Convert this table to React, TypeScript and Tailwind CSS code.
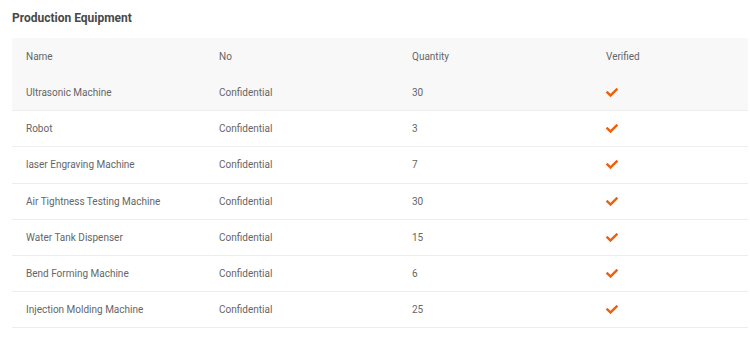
import { FaCheck } from 'react-icons/fa';

const rows = [
  { name: 'Ultrasonic Machine', no: 'Confidential', qty: '30', hl: true },
  { name: 'Robot', no: 'Confidential', qty: '3' },
  { name: 'laser Engraving Machine', no: 'Confidential', qty: '7' },
  { name: 'Air Tightness Testing Machine', no: 'Confidential', qty: '30' },
  { name: 'Water Tank Dispenser', no: 'Confidential', qty: '15' },
  { name: 'Bend Forming Machine', no: 'Confidential', qty: '6' },
  { name: 'Injection Molding Machine', no: 'Confidential', qty: '25' },
];

const cols = 'grid grid-cols-[193px_193px_194px_1fr] items-center';

export default function App() {
  return (
    <div className="h-[337px] w-[750px] bg-white font-['Roboto',sans-serif] text-[10px] text-[#666]">
      <div className="px-3 pt-[10px]">
        <h2 className="text-[12px] font-bold leading-[17px] text-[#484848]">Production Equipment</h2>
        <div className="mt-[11px] mr-[-10px]">
          <div className={`${cols} h-[37px] bg-[#f8f8f8] pl-[14px]`}>
            <span>Name</span>
            <span>No</span>
            <span>Quantity</span>
            <span>Verified</span>
          </div>
          {rows.map((r) => (
            <div
              key={r.name}
              className={`${cols} h-[36.2px] border-b border-[#eeeeee] pl-[14px] ${r.hl ? 'bg-[#f8f8f8]' : ''}`}
            >
              <span>{r.name}</span>
              <span>{r.no}</span>
              <span>{r.qty}</span>
              <span className="text-[#f0600c]">
                <FaCheck className="h-[13px] w-[12px]" />
              </span>
            </div>
          ))}
        </div>
      </div>
    </div>
  );
}
